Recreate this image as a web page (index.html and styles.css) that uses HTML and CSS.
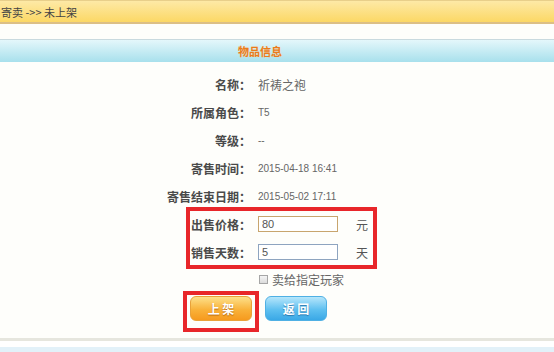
FILE: index.html
```html
<!DOCTYPE html>
<html lang="zh-CN">
<head>
    <meta charset="UTF-8">
    <title>寄卖 - 未上架</title>
    <link rel="stylesheet" href="styles.css">
</head>
<body>
    <div class="crumb">寄卖 -&gt;&gt; 未上架</div>

    <div class="panel">
        <div class="panel-head">物品信息</div>

        <div class="form">
            <div class="label">名称：</div>
            <div class="value cn">祈祷之袍</div>

            <div class="label">所属角色：</div>
            <div class="value">T5</div>

            <div class="label">等级：</div>
            <div class="value">--</div>

            <div class="label">寄售时间：</div>
            <div class="value">2015-04-18 16:41</div>

            <div class="label">寄售结束日期：</div>
            <div class="value">2015-05-02 17:11</div>

            <div class="label">出售价格：</div>
            <div class="value">
                <input type="text" class="field field-price" value="80">
                <span class="unit">元</span>
            </div>

            <div class="label">销售天数：</div>
            <div class="value">
                <input type="text" class="field field-days" value="5">
                <span class="unit">天</span>
            </div>

            <div class="label"></div>
            <div class="value">
                <label class="check"><span class="box"></span>卖给指定玩家</label>
            </div>
        </div>

        <div class="buttons">
            <button class="btn btn-up">上 架</button>
            <button class="btn btn-back">返 回</button>
        </div>

        <!-- annotation boxes -->
        <div class="mark mark-fields"></div>
        <div class="mark mark-button"></div>
    </div>

    <div class="footer"></div>
</body>
</html>
```

FILE: styles.css
```css
body {
    margin: 0;
    background: #fefefb;
    font-family: "Noto Sans CJK SC", "Liberation Sans", sans-serif;
    font-size: 12px;
    color: #333;
    overflow: hidden;
    height: 352px;
}
.crumb {
    height: 21px;
    line-height: 22px;
    padding-left: 1px;
    background: linear-gradient(#fde9a6, #fcd865);
    border-top: 1px solid #e8cf8a;
    border-bottom: 2px solid #dcbf86;
    font-size: 11px;
    color: #444;
}
.panel {
    position: relative;
    margin-top: 15px;
    height: 299px;
}
.panel-head {
    height: 22px;
    line-height: 23px;
    border-top: 1px solid #c9dadf;
    background: linear-gradient(#e4f7fb, #a8e0ec);
    padding-left: 238px;
    font-weight: bold;
    font-size: 11px;
    color: #e97b1c;
    text-shadow: 0 0 1px #fbe0b0;
}
.form {
    display: grid;
    grid-template-columns: 251px 1fr;
    grid-auto-rows: 28px;
    column-gap: 7px;
    padding-top: 8px;
    align-items: center;
}
.label {
    text-align: right;
    font-weight: bold;
    color: #4a4a4a;
}
.value {
    display: flex;
    align-items: center;
    font-family: "Liberation Sans", sans-serif;
    font-size: 10px;
    color: #666;
}
.value.cn {
    font-family: "Noto Sans CJK SC", sans-serif;
    font-size: 12px;
}
.field {
    box-sizing: border-box;
    width: 80px;
    height: 16px;
    padding: 0 3px;
    margin: 0;
    font-family: "Liberation Sans", sans-serif;
    font-size: 11px;
    color: #555;
    background: #fff;
}
.field-price {
    border: 1px solid #c8a56e;
}
.field-days {
    border: 1px solid #8ea4c0;
}
.unit {
    margin-left: 18px;
    font-family: "Noto Sans CJK SC", sans-serif;
    font-size: 12px;
    color: #555;
}
.check {
    display: flex;
    align-items: center;
    gap: 4px;
    margin-top: -2px;
    font-family: "Noto Sans CJK SC", sans-serif;
    font-size: 12px;
    color: #666;
}
.box {
    width: 7px;
    height: 7px;
    margin-left: 1px;
    border: 1px solid #a6a6a6;
    background: linear-gradient(#f4f4f4, #dcdcdc);
}
.buttons {
    display: flex;
    gap: 13px;
    padding-left: 190px;
    margin-top: 2px;
}
.btn {
    width: 62px;
    height: 25px;
    border-radius: 6px;
    font-family: "Noto Sans CJK SC", sans-serif;
    font-size: 12px;
    font-weight: bold;
    color: #fff;
    padding: 0;
    cursor: pointer;
}
.btn-up {
    border: 1px solid #e8a23a;
    background: linear-gradient(#fde08a, #f9b23a 55%, #f69a1e);
    text-shadow: 0 1px 1px #b86a10;
}
.btn-back {
    border: 1px solid #4fb0e4;
    background: linear-gradient(#b6e6fb, #5fc0f0 55%, #3aa8e6);
    text-shadow: 0 1px 1px #2a78b0;
}
.mark {
    position: absolute;
    box-sizing: border-box;
    border: 4px solid #e8262a;
}
.mark-fields {
    left: 186px;
    top: 168px;
    width: 191px;
    height: 62px;
}
.mark-button {
    left: 183px;
    top: 252px;
    width: 76px;
    height: 41px;
}
.footer {
    height: 11px;
    border-top: 3px solid #e6e6de;
    background: linear-gradient(#ffffff 0, #ffffff 6px, #e2f1f9 6px);
}
```
